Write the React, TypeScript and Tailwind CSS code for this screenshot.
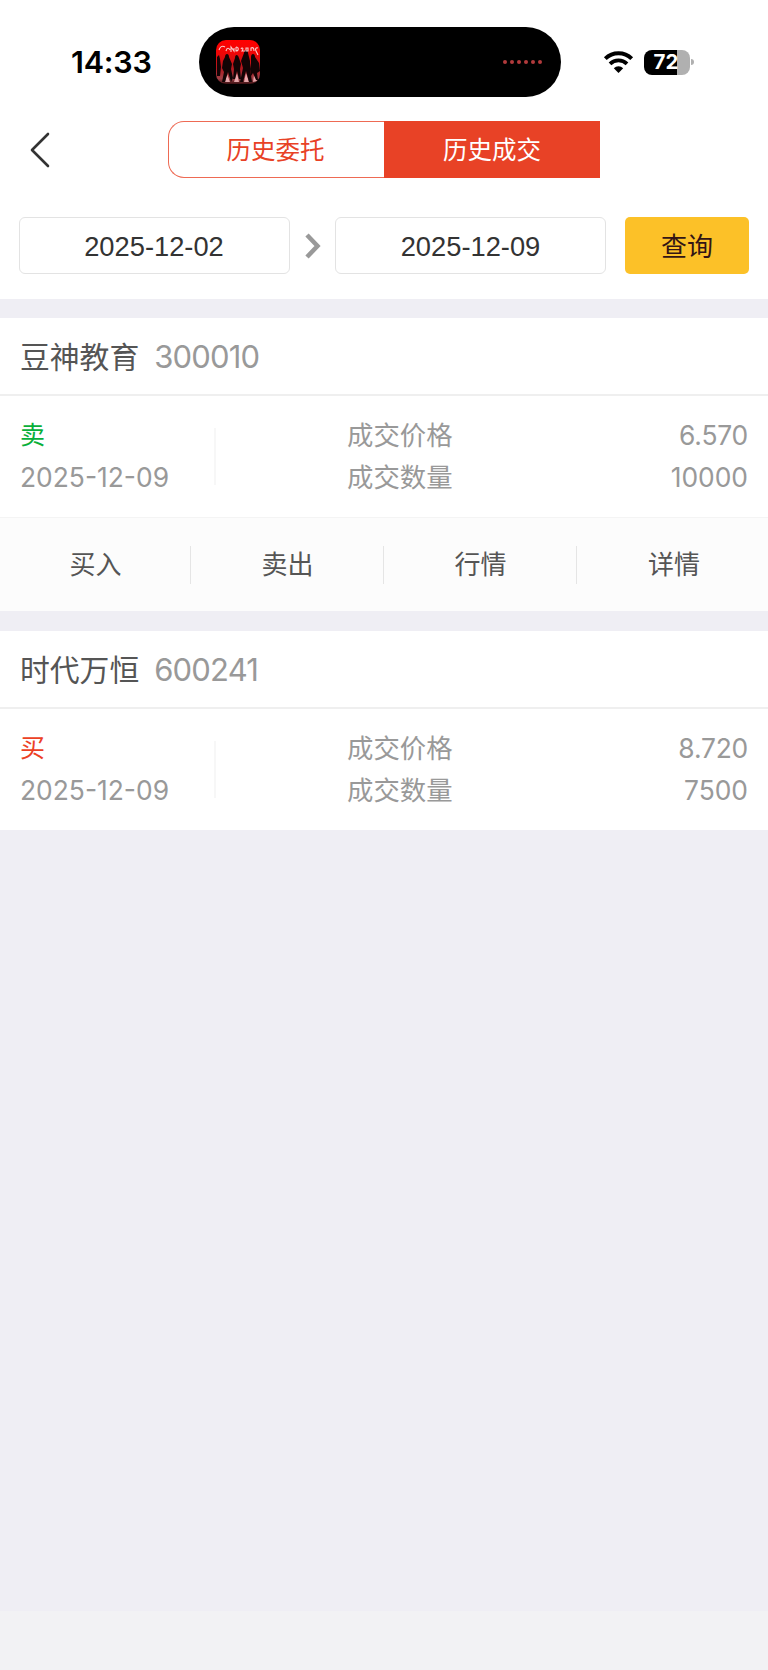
import { useState } from "react";

type Trade = {
  name: string;
  code: string;
  side: "buy" | "sell";
  date: string;
  price: string;
  amount: string;
};

const trades: Trade[] = [
  { name: "豆神教育", code: "300010", side: "sell", date: "2025-12-09", price: "6.570", amount: "10000" },
  { name: "时代万恒", code: "600241", side: "buy", date: "2025-12-09", price: "8.720", amount: "7500" },
];

const actions = ["买入", "卖出", "行情", "详情"];

function AlbumArt() {
  return (
    <svg width="44" height="44" viewBox="0 0 44 44">
      <defs>
        <linearGradient id="art" x1="0" y1="0" x2="0" y2="1">
          <stop offset="0" stopColor="#ff0000" />
          <stop offset="0.3" stopColor="#f00606" />
          <stop offset="0.65" stopColor="#b01820" />
          <stop offset="0.88" stopColor="#a04046" />
          <stop offset="1" stopColor="#3a1012" />
        </linearGradient>
        <clipPath id="artClip">
          <rect width="44" height="44" rx="10" />
        </clipPath>
      </defs>
      <g clipPath="url(#artClip)">
        <rect width="44" height="44" fill="url(#art)" />
        <path d="M9 42l2-8 3 8M18 42l3-9 2 9M28 42l2-9 3 9M37 42l1-7 3 6" fill="#ffc4c8" opacity="0.8" />
        <g fill="#120405">
          <path d="M1 17l2-2 1 4 1 8-1 9H1z" />
          <path d="M9 17c0-4 4-4 4 0l3 7-1 5 2 9-2 4-3-10-3 10H6l2-10-2-4 1-7z" />
          <path d="M19 18c0-4 3-4 4 0l2 6-1 5 1 10h-2l-2-8-2 8h-2l1-10-1-5z" />
          <path d="M28 13c0-4 4-4 4 0l2 8v7l2 14h-3l-3-11-3 11h-3l3-14-2-7z" />
          <path d="M35 17c0-4 4-4 4 0l4 6 1 8-3 2 1 7h-2l-3-7-2 3-1-7 1-6z" />
        </g>
        <path
          d="M9 7c-3-2-5 0-6 3M10 11c1-4 3-3 4-1M15 12V7l3 4V8M20 7v4c3 0 3-4 0-4M25 9c1-2 3-1 1 2h3M30 8v3h2V8zM35 11V8c2-1 3 0 3 3M42 8c-2-1-3 1-2 3l2 4"
          fill="none"
          stroke="#f8cccc"
          strokeWidth="1.1"
        />
      </g>
    </svg>
  );
}

function StatusBar() {
  return (
    <div className="flex h-[97px] items-end pl-[71px]">
      <div className="h-[70px] w-[128px] pt-[14px] font-[Inter] text-[30.5px] leading-[42px] font-semibold tracking-[-0.2px] text-black">14:33</div>
      <div className="flex h-[70px] w-[362px] items-center justify-between rounded-full bg-black pr-[19px] pl-[17px]">
        <AlbumArt />
        <div className="flex gap-[3px]">
          {[0, 1, 2, 3, 4, 5].map((i) => (
            <span key={i} className="size-1 rounded-full bg-[#b23a3c]" />
          ))}
        </div>
      </div>
      <div className="flex h-[70px] items-center pl-[42px]">
        <svg width="31" height="24" viewBox="0 0 31 24" fill="none" stroke="#000">
          <path d="M2.3 8.6a19 19 0 0 1 26.4 0" strokeWidth="4" />
          <path d="M7 13.8a12.3 12.3 0 0 1 17 0" strokeWidth="3.8" />
          <path d="M10.8 18.2a6.8 6.8 0 0 1 9.4 0L15.5 23z" fill="#000" stroke="none" />
        </svg>
        <div className="ml-[10px] flex items-center">
          <div className="flex h-[25px] w-[46px] items-center justify-center rounded-[8px] bg-[linear-gradient(90deg,#000_72%,#b0b0b0_72%)] pr-[2px] font-[Inter] text-[20.5px] leading-none font-bold text-white">
            72
          </div>
          <span className="ml-[1px] h-[6px] w-[3px] rounded-r-full bg-[#b0b0b0]" />
        </div>
      </div>
    </div>
  );
}

function TradeCard({ trade, open }: { trade: Trade; open: boolean }) {
  return (
    <section className="bg-white">
      <div className="flex h-[78px] items-center border-b-2 border-[#efefef] px-5">
        <h2 className="pb-[3px] text-[29.8px] leading-[40px] text-[#555]">{trade.name}</h2>
        <span className="ml-[15px] pt-px font-[Inter] text-[31px] leading-[40px] tracking-[-0.8px] text-[#999]">{trade.code}</span>
      </div>
      <div className="flex h-[121px] items-center px-5 text-[26.4px] leading-[42px] text-[#999]">
        <div className="w-[194px] pb-px">
          <p className={trade.side === "sell" ? "h-[42px] text-[25px] leading-[38px] text-[#09af3a]" : "h-[42px] text-[25px] leading-[38px] text-[#ec4125]"}>
            {trade.side === "sell" ? "卖" : "买"}
          </p>
          <p className="font-[Inter]">{trade.date}</p>
        </div>
        <div className="mb-px h-[57px] w-[2px] bg-[#f7f7f7]" />
        <div className="ml-[131px] flex-1 pb-[3px]">
          <p>成交价格</p>
          <p>成交数量</p>
        </div>
        <div className="pb-px text-right font-[Inter]">
          <p className="tracking-[-0.2px]">{trade.price}</p>
          <p>{trade.amount}</p>
        </div>
      </div>
      {open && (
        <div className="grid h-[94px] grid-cols-[191px_193px_193px_191px] items-center border-t border-[#f4f4f4] bg-[#fcfcfc]">
          {actions.map((a) => (
            <button
              key={a}
              className="h-[38px] border-r border-[#e5e5e5] pl-px text-[26px] text-[#555] last:border-r-0 last:pl-[3px]"
            >
              <span className="block h-[38px] leading-[34px]">{a}</span>
            </button>
          ))}
        </div>
      )}
    </section>
  );
}

export default function App() {
  const [openCode, setOpenCode] = useState("300010");

  return (
    <div className="flex h-[1670px] w-[768px] flex-col bg-[#efeef4] font-['Noto_Sans_CJK_SC',sans-serif]">
      <header className="h-[299px] bg-white">
        <StatusBar />

        {/* Tabs */}
        <div className="mt-6 flex h-[57px] items-center">
          <button className="w-[168px] pl-[29px]">
            <svg width="22" height="38" viewBox="0 0 22 38" fill="none" stroke="#333" strokeWidth="2.6" strokeLinecap="round" strokeLinejoin="round">
              <path d="M19 3L3 19l16 16" />
            </svg>
          </button>
          <button className="h-[57px] w-[216px] rounded-l-[16px] border border-r-0 border-[#ee6a54] pr-[2px] text-[24.5px] text-[#e84226]">历史委托</button>
          <button className="h-[57px] w-[216px] bg-[#e84226] text-[24.5px] text-white">历史成交</button>
        </div>

        {/* Date range */}
        <div className="mt-[39px] flex h-[57px] items-center pl-[19px] text-[27.3px] text-[#333]">
          <div className="flex h-[57px] w-[271px] items-center justify-center rounded-[6px] border border-[#e3e3e3] pt-[3px] pr-px font-['Liberation_Sans']">2025-12-02</div>
          <svg className="mr-[14px] ml-[15px]" width="16" height="26" viewBox="0 0 16 26" fill="none" stroke="#999" strokeWidth="4.5">
            <path d="M2 2l10.5 11L2 24" />
          </svg>
          <div className="flex h-[57px] w-[271px] items-center justify-center rounded-[6px] border border-[#e3e3e3] pt-[3px] font-['Liberation_Sans']">2025-12-09</div>
          <button className="ml-[19px] h-[57px] w-[124px] rounded-[5px] bg-[#fcc128] pb-[3px] text-[26px] text-[#331515]">查询</button>
        </div>
      </header>

      <main className="mt-[19px] flex flex-1 flex-col gap-5">
        {trades.map((t) => (
          <div key={t.code} onClick={() => setOpenCode(t.code)}>
            <TradeCard trade={t} open={openCode === t.code} />
          </div>
        ))}
      </main>

      <footer className="h-[59px] bg-[#f2f2f4]" />
    </div>
  );
}
